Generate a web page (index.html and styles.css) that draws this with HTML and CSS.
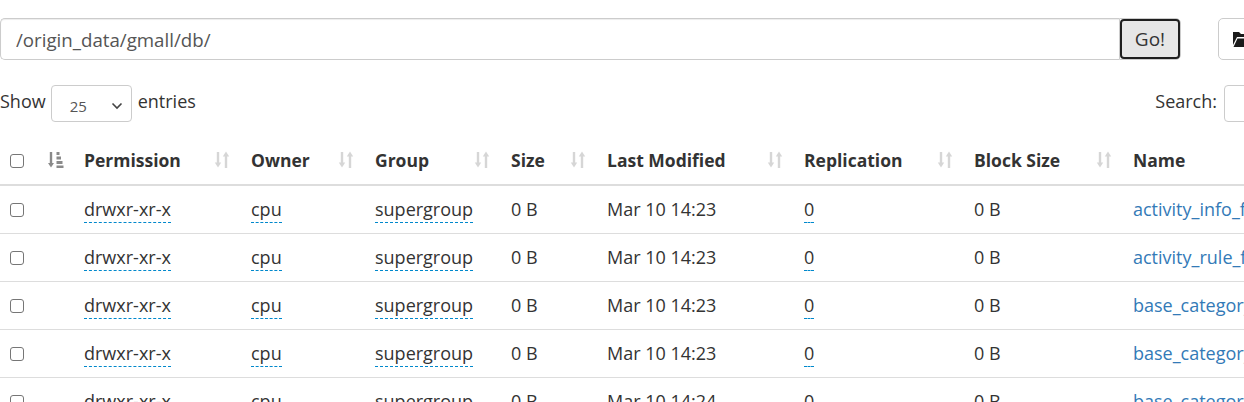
FILE: index.html
```html
<!DOCTYPE html>
<html>
<head>
<meta charset="utf-8">
<link rel="stylesheet" href="styles.css">
</head>
<body>
<div class="page">
  <div class="toolbar">
    <div class="input-group">
      <input class="path-input" type="text" value="/origin_data/gmall/db/">
      <button class="go-btn">Go!</button>
    </div>
    <button class="icon-btn">
      <svg width="20" height="18" viewBox="0 0 20 18"><path d="M1 2h6l2 2h7v3H5L1 15z" fill="#1a1a1a"/><path d="M5.5 8.5H20l-4 8.5H1.5z" fill="#1a1a1a"/></svg>
    </button>
  </div>

  <div class="controls">
    <div class="length">
      <span>Show</span>
      <div class="select">
        <span class="sel-val">25</span>
        <svg class="chev" width="12" height="8" viewBox="0 0 12 8"><path d="M1.5 1.5 L6 6 L10.5 1.5" fill="none" stroke="#444" stroke-width="1.6"/></svg>
      </div>
      <span>entries</span>
    </div>
    <div class="search">
      <span>Search:</span>
      <div class="search-input"></div>
    </div>
  </div>

  <table class="files">
    <colgroup>
      <col class="c-chk"><col class="c-perm"><col class="c-owner"><col class="c-group"><col class="c-size"><col class="c-mod"><col class="c-rep"><col class="c-block"><col class="c-name">
    </colgroup>
    <thead>
      <tr>
        <th class="th-chk"><span class="chk"></span><svg class="sort sorted" width="16" height="18" viewBox="0 0 16 18"><path d="M3 1v12.5" stroke="#8a8a8a" stroke-width="2.4"/><path d="M0 12h6l-3 4.5z" fill="#8a8a8a"/><rect x="8.5" y="1" width="3" height="3" fill="#8a8a8a"/><rect x="8.5" y="5.5" width="4.5" height="3" fill="#8a8a8a"/><rect x="8.5" y="10" width="6" height="3" fill="#8a8a8a"/><rect x="8.5" y="14.5" width="7" height="2.5" fill="#8a8a8a"/></svg></th>
        <th>Permission<svg class="sort" width="16" height="18" viewBox="0 0 16 18"><path d="M4 1v12" stroke="#d6d6d6" stroke-width="2.4"/><path d="M0.8 11.5h6.4l-3.2 5z" fill="#d6d6d6"/><path d="M12 17V5" stroke="#d6d6d6" stroke-width="2.4"/><path d="M8.8 5.5h6.4l-3.2-5z" fill="#d6d6d6"/></svg></th>
        <th>Owner<svg class="sort" width="16" height="18" viewBox="0 0 16 18"><path d="M4 1v12" stroke="#d6d6d6" stroke-width="2.4"/><path d="M0.8 11.5h6.4l-3.2 5z" fill="#d6d6d6"/><path d="M12 17V5" stroke="#d6d6d6" stroke-width="2.4"/><path d="M8.8 5.5h6.4l-3.2-5z" fill="#d6d6d6"/></svg></th>
        <th>Group<svg class="sort" width="16" height="18" viewBox="0 0 16 18"><path d="M4 1v12" stroke="#d6d6d6" stroke-width="2.4"/><path d="M0.8 11.5h6.4l-3.2 5z" fill="#d6d6d6"/><path d="M12 17V5" stroke="#d6d6d6" stroke-width="2.4"/><path d="M8.8 5.5h6.4l-3.2-5z" fill="#d6d6d6"/></svg></th>
        <th>Size<svg class="sort" width="16" height="18" viewBox="0 0 16 18"><path d="M4 1v12" stroke="#d6d6d6" stroke-width="2.4"/><path d="M0.8 11.5h6.4l-3.2 5z" fill="#d6d6d6"/><path d="M12 17V5" stroke="#d6d6d6" stroke-width="2.4"/><path d="M8.8 5.5h6.4l-3.2-5z" fill="#d6d6d6"/></svg></th>
        <th>Last Modified<svg class="sort" width="16" height="18" viewBox="0 0 16 18"><path d="M4 1v12" stroke="#d6d6d6" stroke-width="2.4"/><path d="M0.8 11.5h6.4l-3.2 5z" fill="#d6d6d6"/><path d="M12 17V5" stroke="#d6d6d6" stroke-width="2.4"/><path d="M8.8 5.5h6.4l-3.2-5z" fill="#d6d6d6"/></svg></th>
        <th>Replication<svg class="sort" width="16" height="18" viewBox="0 0 16 18"><path d="M4 1v12" stroke="#d6d6d6" stroke-width="2.4"/><path d="M0.8 11.5h6.4l-3.2 5z" fill="#d6d6d6"/><path d="M12 17V5" stroke="#d6d6d6" stroke-width="2.4"/><path d="M8.8 5.5h6.4l-3.2-5z" fill="#d6d6d6"/></svg></th>
        <th>Block Size<svg class="sort" width="16" height="18" viewBox="0 0 16 18"><path d="M4 1v12" stroke="#d6d6d6" stroke-width="2.4"/><path d="M0.8 11.5h6.4l-3.2 5z" fill="#d6d6d6"/><path d="M12 17V5" stroke="#d6d6d6" stroke-width="2.4"/><path d="M8.8 5.5h6.4l-3.2-5z" fill="#d6d6d6"/></svg></th>
        <th>Name</th>
      </tr>
    </thead>
    <tbody>
      <tr><td><span class="chk"></span></td><td><span class="dash">drwxr-xr-x</span></td><td><span class="dash">cpu</span></td><td><span class="dash">supergroup</span></td><td>0 B</td><td>Mar 10 14:23</td><td><span class="dash">0</span></td><td>0 B</td><td><a class="link">activity_info_full</a></td></tr>
      <tr><td><span class="chk"></span></td><td><span class="dash">drwxr-xr-x</span></td><td><span class="dash">cpu</span></td><td><span class="dash">supergroup</span></td><td>0 B</td><td>Mar 10 14:23</td><td><span class="dash">0</span></td><td>0 B</td><td><a class="link">activity_rule_full</a></td></tr>
      <tr><td><span class="chk"></span></td><td><span class="dash">drwxr-xr-x</span></td><td><span class="dash">cpu</span></td><td><span class="dash">supergroup</span></td><td>0 B</td><td>Mar 10 14:23</td><td><span class="dash">0</span></td><td>0 B</td><td><a class="link">base_category1_full</a></td></tr>
      <tr><td><span class="chk"></span></td><td><span class="dash">drwxr-xr-x</span></td><td><span class="dash">cpu</span></td><td><span class="dash">supergroup</span></td><td>0 B</td><td>Mar 10 14:23</td><td><span class="dash">0</span></td><td>0 B</td><td><a class="link">base_category2_full</a></td></tr>
      <tr><td><span class="chk"></span></td><td><span class="dash">drwxr-xr-x</span></td><td><span class="dash">cpu</span></td><td><span class="dash">supergroup</span></td><td>0 B</td><td>Mar 10 14:24</td><td><span class="dash">0</span></td><td>0 B</td><td><a class="link">base_category3_full</a></td></tr>
    </tbody>
  </table>
</div>
</body>
</html>
```

FILE: styles.css
```css
html, body {
  margin: 0;
  padding: 0;
  background: #fff;
  overflow: hidden;
}
body {
  font-family: "Open Sans", "Noto Sans", sans-serif;
  font-size: 18px;
  color: #333;
}
.page {
  width: 1400px;
  padding-top: 18px;
}
.toolbar {
  display: flex;
  align-items: flex-start;
}
.input-group {
  display: flex;
  width: 1181px;
  height: 42px;
}
.path-input {
  flex: 1;
  box-sizing: border-box;
  height: 42px;
  margin: 0;
  border: 1px solid #ccc;
  border-right: none;
  border-radius: 5px 0 0 5px;
  padding: 0 15px;
  font-family: inherit;
  font-size: 18.7px;
  color: #555;
  box-shadow: inset 0 1px 1px rgba(0,0,0,.075);
  outline: none;
}
.go-btn {
  box-sizing: border-box;
  width: 62px;
  height: 42px;
  margin: 0;
  border: 1px solid #ccc;
  border-radius: 0 5px 5px 0;
  background: #fff;
  padding: 1px;
  font-family: inherit;
  font-size: 19px;
  color: #333;
  position: relative;
  isolation: isolate;
}
.go-btn::before {
  content: "";
  position: absolute;
  left: 0; top: 0; right: 0; bottom: 0;
  border: 2px solid #1e1e1e;
  border-radius: 4px;
  background: #e6e6e6;
  z-index: -1;
}
.icon-btn {
  box-sizing: border-box;
  margin-left: 37px;
  width: 60px;
  height: 42px;
  border: 1px solid #ccc;
  border-radius: 5px;
  background: #fff;
  padding: 0 0 0 13px;
  display: flex;
  align-items: center;
}
.controls {
  display: flex;
  justify-content: space-between;
  align-items: center;
  margin-top: 25px;
  height: 37px;
}
.length {
  display: flex;
  align-items: center;
  line-height: 30px;
  padding-bottom: 5px;
}
.select {
  box-sizing: border-box;
  width: 81px;
  height: 37px;
  margin: 5px 6px 0 5px;
  border: 1px solid #ccc;
  border-radius: 4px;
  display: flex;
  align-items: center;
  justify-content: space-between;
  padding: 4px 8px 0 18px;
  font-size: 15px;
  color: #555;
}
.search {
  display: flex;
  align-items: center;
  line-height: 30px;
  padding-bottom: 5px;
}
.search-input {
  box-sizing: border-box;
  width: 176px;
  height: 37px;
  margin: 5px 0 0 7px;
  border: 1px solid #ccc;
  border-radius: 4px;
}
.files {
  margin-top: 16px;
  border-collapse: collapse;
  table-layout: fixed;
  width: 1400px;
}
.c-chk { width: 71px; }
.c-perm { width: 167px; }
.c-owner { width: 124px; }
.c-group { width: 136px; }
.c-size { width: 96px; }
.c-mod { width: 197px; }
.c-rep { width: 170px; }
.c-block { width: 159px; }
.files th {
  position: relative;
  text-align: left;
  font-weight: 700;
  font-size: 17.5px;
  padding: 10px 13px 11px;
  line-height: 25px;
  border-bottom: 2px solid #ddd;
  white-space: nowrap;
}
.files th.th-chk { padding-left: 10px; }
.sort {
  position: absolute;
  right: 8px;
  top: 13px;
}
.sort.sorted { right: 7px; }
.files td {
  padding: 11px 13px 11px;
  line-height: 25px;
  border-top: 1px solid #ddd;
  white-space: nowrap;
  overflow: hidden;
}
.files td:first-child { padding-left: 10px; }
.chk {
  display: inline-block;
  box-sizing: border-box;
  width: 14px;
  height: 14px;
  border: 1px solid #767676;
  border-radius: 3px;
  vertical-align: -1px;
}
.dash {
  border-bottom: 1px dashed #0088cc;
  padding-bottom: 1px;
}
.link {
  color: #337ab7;
  text-decoration: none;
}
```
